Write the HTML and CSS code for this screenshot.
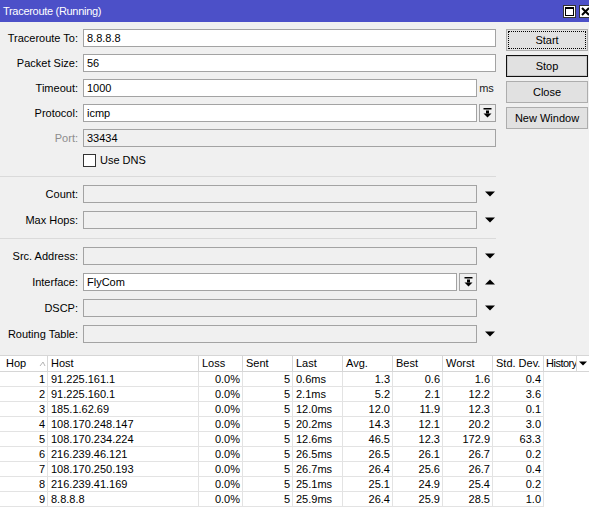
FILE: index.html
```html
<!DOCTYPE html>
<html>
<head>
  <link rel="stylesheet" href="styles.css">
</head>
<body>
  <div class="window">
    <div class="titlebar">
      <span class="title">Traceroute (Running)</span>
      <div class="wbtns">
        <div class="wbtn"><svg width="11" height="11" viewBox="0 0 11 11"><rect x="1.5" y="1.5" width="8" height="8" fill="none" stroke="#000"/><rect x="1" y="1" width="9" height="2" fill="#000"/></svg></div>
        <div class="wbtn"><svg width="11" height="11" viewBox="0 0 11 11"><path d="M2 2 L9 9 M9 2 L2 9" stroke="#000" stroke-width="2"/></svg></div>
      </div>
    </div>

    <div class="panel">
      <div class="form">
        <div class="group first">
          <div class="row">
            <span class="label">Traceroute To:</span>
            <div class="field">8.8.8.8</div>
          </div>
          <div class="row">
            <span class="label">Packet Size:</span>
            <div class="field">56</div>
          </div>
          <div class="row">
            <span class="label">Timeout:</span>
            <div class="field">1000</div>
            <span class="tail unit">ms</span>
          </div>
          <div class="row">
            <span class="label">Protocol:</span>
            <div class="field">icmp</div>
            <span class="tail"><span class="dropbtn"><svg width="15" height="16" viewBox="0 0 15 16"><rect x="3.5" y="3" width="8" height="1.5" fill="#000"/><rect x="6" y="5.5" width="3" height="3" fill="#000"/><polygon points="3.5,8.5 11.5,8.5 7.5,12.5" fill="#000"/></svg></span></span>
          </div>
          <div class="row">
            <span class="label dim">Port:</span>
            <div class="field off">33434</div>
          </div>
        </div>
        <div class="row dns">
          <span class="label"></span>
          <span class="check"></span>
          <span>Use DNS</span>
        </div>

        <div class="sep"></div>

        <div class="group">
          <div class="row">
            <span class="label">Count:</span>
            <div class="field off"></div>
            <span class="tail"><svg width="12" height="8" viewBox="0 0 12 8"><polygon points="1,1.5 11,1.5 6,6.5" fill="#000"/></svg></span>
          </div>
          <div class="row">
            <span class="label">Max Hops:</span>
            <div class="field off"></div>
            <span class="tail"><svg width="12" height="8" viewBox="0 0 12 8"><polygon points="1,1.5 11,1.5 6,6.5" fill="#000"/></svg></span>
          </div>
        </div>

        <div class="sep"></div>

        <div class="group">
          <div class="row">
            <span class="label">Src. Address:</span>
            <div class="field off"></div>
            <span class="tail"><svg width="12" height="8" viewBox="0 0 12 8"><polygon points="1,1.5 11,1.5 6,6.5" fill="#000"/></svg></span>
          </div>
          <div class="row">
            <span class="label">Interface:</span>
            <div class="field">FlyCom</div>
            <span class="dropbtn inline"><svg width="15" height="16" viewBox="0 0 15 16"><rect x="3.5" y="3" width="8" height="1.5" fill="#000"/><rect x="6" y="5.5" width="3" height="3" fill="#000"/><polygon points="3.5,8.5 11.5,8.5 7.5,12.5" fill="#000"/></svg></span>
            <span class="tail"><svg width="12" height="8" viewBox="0 0 12 8"><polygon points="1,6.5 11,6.5 6,1.5" fill="#000"/></svg></span>
          </div>
          <div class="row">
            <span class="label">DSCP:</span>
            <div class="field off"></div>
            <span class="tail"><svg width="12" height="8" viewBox="0 0 12 8"><polygon points="1,1.5 11,1.5 6,6.5" fill="#000"/></svg></span>
          </div>
          <div class="row">
            <span class="label">Routing Table:</span>
            <div class="field off"></div>
            <span class="tail"><svg width="12" height="8" viewBox="0 0 12 8"><polygon points="1,1.5 11,1.5 6,6.5" fill="#000"/></svg></span>
          </div>
        </div>
      </div>

      <div class="buttons">
        <div class="btn focus"><span>Start</span></div>
        <div class="btn default">Stop</div>
        <div class="btn">Close</div>
        <div class="btn">New Window</div>
      </div>
    </div>

    <div class="grid">
      <div class="hrow">
        <div class="h">Hop<svg class="sort" width="7" height="6" viewBox="0 0 7 6"><path d="M1 5 L4 1 L6 5" fill="none" stroke="#b5b5b5"/></svg></div>
        <div class="h">Host</div>
        <div class="h">Loss</div>
        <div class="h">Sent</div>
        <div class="h">Last</div>
        <div class="h">Avg.</div>
        <div class="h">Best</div>
        <div class="h">Worst</div>
        <div class="h">Std. Dev.</div>
        <div class="h tight">History</div>
        <div class="h menu"><svg width="10" height="7" viewBox="0 0 10 7"><polygon points="1,1.5 9,1.5 5,5.5" fill="#000"/></svg></div>
      </div>
      <div class="drow"><div class="r">1</div><div>91.225.161.1</div><div class="r">0.0%</div><div class="r">5</div><div>0.6ms</div><div class="r">1.3</div><div class="r">0.6</div><div class="r">1.6</div><div class="r">0.4</div><div class="blank"></div></div>
      <div class="drow"><div class="r">2</div><div>91.225.160.1</div><div class="r">0.0%</div><div class="r">5</div><div>2.1ms</div><div class="r">5.2</div><div class="r">2.1</div><div class="r">12.2</div><div class="r">3.6</div><div class="blank"></div></div>
      <div class="drow"><div class="r">3</div><div>185.1.62.69</div><div class="r">0.0%</div><div class="r">5</div><div>12.0ms</div><div class="r">12.0</div><div class="r">11.9</div><div class="r">12.3</div><div class="r">0.1</div><div class="blank"></div></div>
      <div class="drow"><div class="r">4</div><div>108.170.248.147</div><div class="r">0.0%</div><div class="r">5</div><div>20.2ms</div><div class="r">14.3</div><div class="r">12.1</div><div class="r">20.2</div><div class="r">3.0</div><div class="blank"></div></div>
      <div class="drow"><div class="r">5</div><div>108.170.234.224</div><div class="r">0.0%</div><div class="r">5</div><div>12.6ms</div><div class="r">46.5</div><div class="r">12.3</div><div class="r">172.9</div><div class="r">63.3</div><div class="blank"></div></div>
      <div class="drow"><div class="r">6</div><div>216.239.46.121</div><div class="r">0.0%</div><div class="r">5</div><div>26.5ms</div><div class="r">26.5</div><div class="r">26.1</div><div class="r">26.7</div><div class="r">0.2</div><div class="blank"></div></div>
      <div class="drow"><div class="r">7</div><div>108.170.250.193</div><div class="r">0.0%</div><div class="r">5</div><div>26.7ms</div><div class="r">26.4</div><div class="r">25.6</div><div class="r">26.7</div><div class="r">0.4</div><div class="blank"></div></div>
      <div class="drow"><div class="r">8</div><div>216.239.41.169</div><div class="r">0.0%</div><div class="r">5</div><div>25.1ms</div><div class="r">25.1</div><div class="r">24.9</div><div class="r">25.4</div><div class="r">0.2</div><div class="blank"></div></div>
      <div class="drow"><div class="r">9</div><div>8.8.8.8</div><div class="r">0.0%</div><div class="r">5</div><div>25.9ms</div><div class="r">26.4</div><div class="r">25.9</div><div class="r">28.5</div><div class="r">1.0</div><div class="blank"></div></div>
    </div>
  </div>
</body>
</html>
```

FILE: styles.css
```css
body {
  margin: 0;
  font-family: "Liberation Sans", Arial, sans-serif;
  font-size: 11px;
  color: #000;
  background: #fff;
}

.window {
  width: 589px;
  height: 532px;
  overflow: hidden;
  background: #fff;
}

.titlebar {
  height: 22px;
  background: #4c50c8;
  color: #fff;
  display: flex;
  align-items: center;
  padding-left: 3px;
}

.title {
  flex: 1;
  font-size: 11px;
  letter-spacing: -0.3px;
}

.wbtns {
  display: flex;
  gap: 3px;
  margin-right: -3px;
}

.wbtn {
  width: 11px;
  height: 11px;
  background: #fff;
  border: 1px solid #333;
  display: flex;
}

.panel {
  background: #f0f0f0;
  display: flex;
  align-items: flex-start;
  padding: 7px 0 12px;
}

.form {
  width: 496px;
}

.group {
  display: flex;
  flex-direction: column;
  gap: 8px;
  padding-top: 8px;
}

.group.first {
  gap: 7px;
  padding-top: 0;
}

.row {
  display: flex;
  align-items: center;
  height: 18px;
}

.label {
  width: 78px;
  padding-right: 5px;
  text-align: right;
  flex: none;
}

.label.dim {
  color: #8d8d8d;
}

.field {
  flex: 1;
  height: 18px;
  box-sizing: border-box;
  border: 1px solid #a3a3a3;
  background: #fff;
  padding: 0 3px;
  line-height: 16px;
}

.field.off {
  background: #f0f0f0;
}

.tail {
  width: 19px;
  flex: none;
  display: flex;
  align-items: center;
  justify-content: flex-end;
}

.unit {
  justify-content: center;
  color: #222;
}

.dropbtn {
  width: 17px;
  height: 18px;
  box-sizing: border-box;
  border: 1px solid #a3a3a3;
  background: #f0f0f0;
  display: flex;
  align-items: center;
  justify-content: center;
}

.dropbtn.inline {
  margin-left: 2px;
  width: 18px;
}

.dns {
  margin-top: 4px;
}

.check {
  width: 13px;
  height: 13px;
  box-sizing: border-box;
  border: 1px solid #333;
  background: #fff;
  margin-right: 4px;
}

.sep {
  height: 1px;
  background: #dadada;
  margin-top: 7px;
}

.group + .sep {
  margin-top: 9px;
}

.buttons {
  margin-left: 10px;
  width: 82px;
  display: flex;
  flex-direction: column;
  gap: 4px;
}

.btn {
  height: 22px;
  box-sizing: border-box;
  border: 1px solid #adadad;
  background: #e1e1e1;
  display: flex;
  align-items: center;
  justify-content: center;
}

.btn.focus span {
  display: flex;
  align-items: center;
  justify-content: center;
  width: 76px;
  height: 16px;
  outline: 1px dotted #000;
}

.btn.default {
  border: 1px solid #111;
  box-shadow: inset 0 0 0 1px #c8c8c8;
}

.grid {
  background: #fff;
}

.hrow,
.drow {
  display: grid;
  grid-template-columns: 48px 151px 44px 50px 50px 50px 50px 50px 51px 33px 12px;
}

.hrow {
  height: 17px;
  box-sizing: border-box;
  border-top: 1px solid #d6d6d6;
  border-bottom: 1px solid #d6d6d6;
}

.h {
  border-right: 1px solid #d6d6d6;
  padding-left: 3px;
  line-height: 15px;
  display: flex;
  align-items: center;
  white-space: nowrap;
  overflow: hidden;
}

.h:first-child {
  padding-left: 6px;
}

.h.tight {
  padding-left: 2px;
  letter-spacing: -0.5px;
}

.sort {
  margin-left: 13px;
}

.h.menu {
  border-right: none;
  padding-left: 1px;
}

.drow {
  height: 15px;
  line-height: 14px;
}

.drow > div {
  border-right: 1px solid #e3e3e3;
  border-bottom: 1px solid #e3e3e3;
  padding: 0 3px;
  white-space: nowrap;
}

.drow > .r {
  text-align: right;
  padding-right: 2px;
}

.drow > .blank {
  border: none;
}
```
